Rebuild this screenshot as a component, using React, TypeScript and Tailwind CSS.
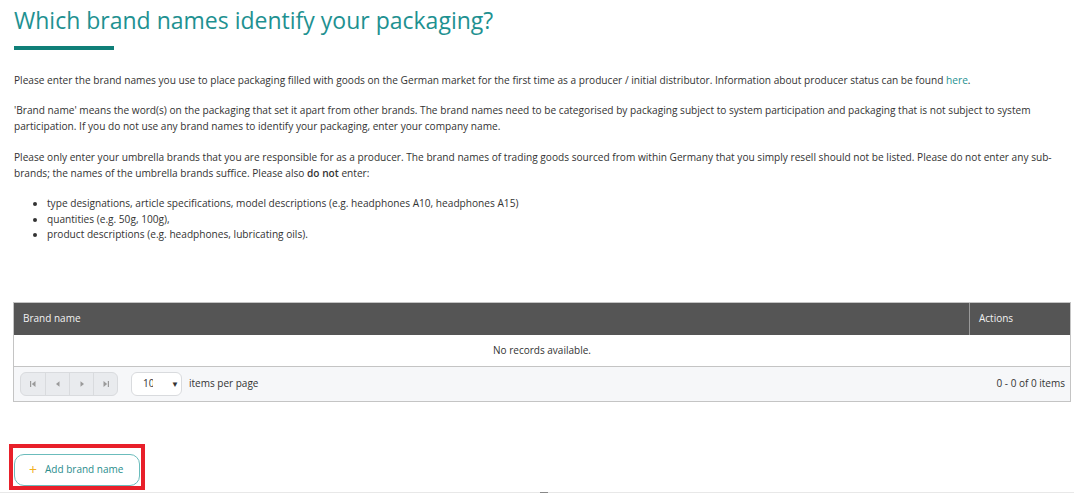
import React from "react";

const font = { fontFamily: '"Open Sans", "Liberation Sans", sans-serif' };

function PagerIcon({ kind }: { kind: "first" | "prev" | "next" | "last" }) {
  return (
    <svg width="8" height="8" viewBox="0 0 8 8" className="fill-[#9a9a9a]">
      {kind === "first" && (
        <>
          <rect x="1" y="1" width="1.2" height="6" />
          <path d="M6.5 1 L2.8 4 L6.5 7 Z" />
        </>
      )}
      {kind === "prev" && <path d="M5.5 1.2 L2 4 L5.5 6.8 Z" />}
      {kind === "next" && <path d="M2.5 1.2 L6 4 L2.5 6.8 Z" />}
      {kind === "last" && (
        <>
          <path d="M1.5 1 L5.2 4 L1.5 7 Z" />
          <rect x="5.8" y="1" width="1.2" height="6" />
        </>
      )}
    </svg>
  );
}

function BrandTable() {
  return (
    <div className="mt-[59px] border border-[#c4c4c4] text-[10px] text-[#333]">
      <div className="flex h-[32px] bg-[#555555] text-[#f2f2f2]">
        <div className="flex flex-1 items-center pl-[9px]">Brand name</div>
        <div className="flex w-[101px] items-center border-l border-[#9a9a9a] pl-[9px]">
          Actions
        </div>
      </div>
      <div className="flex h-[32px] items-center justify-center border-b border-[#c4c4c4] bg-white">
        No records available.
      </div>
      <div className="flex h-[34px] items-center bg-[#f6f7f9] pl-[6px] pr-[5px]">
        <div className="flex h-[24px] overflow-hidden rounded-[6px] border border-[#d9dbde] bg-[#e9ebee]">
          {(["first", "prev", "next", "last"] as const).map((k, i) => (
            <div
              key={k}
              className={
                "flex w-[24px] items-center justify-center " +
                (i > 0 ? "border-l border-[#d9dbde]" : "")
              }
            >
              <PagerIcon kind={k} />
            </div>
          ))}
        </div>
        <div className="ml-[13px] flex h-[24px] w-[51px] items-center rounded-[6px] border border-[#d9dbde] bg-white pl-[11px]">
          <span className="w-[10px] overflow-hidden whitespace-nowrap">10</span>
          <span className="ml-[18px] text-[8px] text-[#333]">▼</span>
        </div>
        <span className="ml-[7px]">items per page</span>
        <span className="ml-auto">0 - 0 of 0 items</span>
      </div>
    </div>
  );
}

export default function App() {
  return (
    <div className="relative h-[493px] w-[1074px] overflow-hidden bg-white" style={font}>
      <div className="ml-[13px] w-[1058px]">
        <h1 className="pl-[1px] pt-[6px] text-[23px] leading-[28px] text-[#1e9191]">
          Which brand names identify your packaging?
        </h1>
        <div className="ml-[1px] mt-[12px] h-[4px] w-[100px] bg-[#0f7f78]" />

        <div className="mt-[22px] pl-[1px] text-[10.15px] leading-[16px] text-[#333]">
          <p>
            Please enter the brand names you use to place packaging filled with goods on the German
            market for the first time as a producer / initial distributor. Information about
            producer status can be found <span className="text-[#1e9191]">here</span>.
          </p>
          <p className="mt-[14px]">
            'Brand name' means the word(s) on the packaging that set it apart from other brands. The
            brand names need to be categorised by packaging subject to system participation and
            packaging that is not subject to system participation. If you do not use any brand names
            to identify your packaging, enter your company name.
          </p>
          <p className="mt-[15px]">
            Please only enter your umbrella brands that you are responsible for as a producer. The
            brand names of trading goods sourced from within Germany that you simply resell should
            not be listed. Please do not enter any sub-brands; the names of the umbrella brands
            suffice. Please also <b className="font-semibold">do not</b> enter:
          </p>
          <ul className="mt-[15px] list-disc pl-[33px] leading-[15.5px]">
            <li>
              type designations, article specifications, model descriptions (e.g. headphones A10,
              headphones A15)
            </li>
            <li>quantities (e.g. 50g, 100g),</li>
            <li>product descriptions (e.g. headphones, lubricating oils).</li>
          </ul>
        </div>

        <BrandTable />
      </div>

      <div className="ml-[9px] mt-[42px] w-fit border-[4px] border-[#e8202a] px-[1px] pt-[6px]">
        <button className="flex h-[32px] w-[126px] items-center rounded-[10px] border border-[#6bbcbc] bg-white pl-[14px] text-[10px] text-[#2a8d8d]">
          <span className="text-[14px] leading-none text-[#f2b01e]">+</span>
          <span className="ml-[8px]">Add brand name</span>
        </button>
      </div>

      <div className="absolute bottom-0 left-0 h-[1px] w-full bg-[#e8e8e8]">
        <div className="ml-[540px] h-[1px] w-[8px] bg-[#888]" />
      </div>
    </div>
  );
}
